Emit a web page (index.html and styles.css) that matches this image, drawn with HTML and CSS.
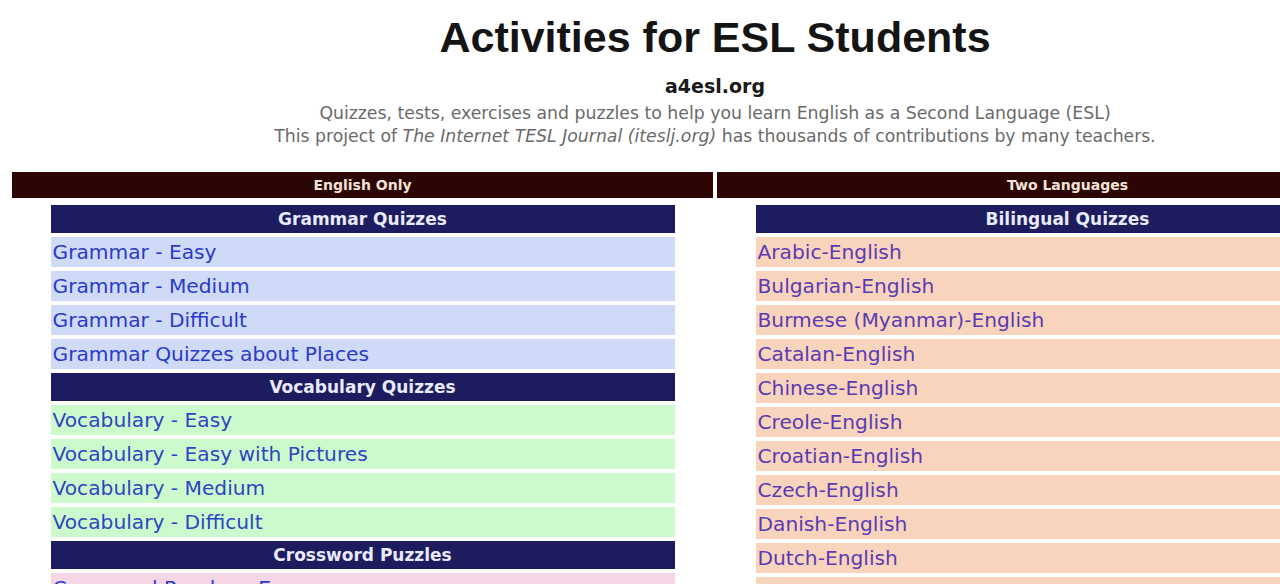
FILE: index.html
```html
<!DOCTYPE html>
<html lang="en">
<head>
<meta charset="utf-8">
<title>Activities for ESL Students</title>
<link rel="stylesheet" href="styles.css">
</head>
<body>
<div class="page">
  <header class="masthead">
    <h1 class="title">Activities for ESL Students</h1>
    <div class="site">a4esl.org</div>
    <p class="tagline">Quizzes, tests, exercises and puzzles to help you learn English as a Second Language (ESL)<br>This project of <i>The Internet TESL Journal (iteslj.org)</i> has thousands of contributions by many teachers.</p>
  </header>
  <div class="columns">
    <section class="col">
      <div class="bar">English Only</div>
      <div class="list">
        <div class="head">Grammar Quizzes</div>
        <a class="row blue" href="#">Grammar - Easy</a>
        <a class="row blue" href="#">Grammar - Medium</a>
        <a class="row blue" href="#">Grammar - Difficult</a>
        <a class="row blue" href="#">Grammar Quizzes about Places</a>
        <div class="head">Vocabulary Quizzes</div>
        <a class="row green" href="#">Vocabulary - Easy</a>
        <a class="row green" href="#">Vocabulary - Easy with Pictures</a>
        <a class="row green" href="#">Vocabulary - Medium</a>
        <a class="row green" href="#">Vocabulary - Difficult</a>
        <div class="head">Crossword Puzzles</div>
        <a class="row pink" href="#">Crossword Puzzles - Easy</a>
      </div>
    </section>
    <section class="col">
      <div class="bar">Two Languages</div>
      <div class="list">
        <div class="head">Bilingual Quizzes</div>
        <a class="row peach" href="#">Arabic-English</a>
        <a class="row peach" href="#">Bulgarian-English</a>
        <a class="row peach" href="#">Burmese (Myanmar)-English</a>
        <a class="row peach" href="#">Catalan-English</a>
        <a class="row peach" href="#">Chinese-English</a>
        <a class="row peach" href="#">Creole-English</a>
        <a class="row peach" href="#">Croatian-English</a>
        <a class="row peach" href="#">Czech-English</a>
        <a class="row peach" href="#">Danish-English</a>
        <a class="row peach" href="#">Dutch-English</a>
        <a class="row peach" href="#">Esperanto-English</a>
      </div>
    </section>
  </div>
</div>
</body>
</html>
```

FILE: styles.css
```css
html {
  overflow: hidden;
  background: #ffffff;
}
body {
  margin: 8px;
  width: 1414px;
  font-family: "DejaVu Sans", Verdana, sans-serif;
  color: #111;
}
.masthead {
  text-align: center;
}
.title {
  margin: 4px 0 0;
  font-family: "Liberation Sans", Arial, sans-serif;
  font-weight: bold;
  font-size: 43px;
  line-height: 50px;
  color: #141414;
}
.site {
  margin-top: 12px;
  font-weight: bold;
  font-size: 19px;
  line-height: 24px;
  color: #1a1a1a;
}
.tagline {
  margin: 4px 0 0;
  font-size: 17.3px;
  line-height: 23px;
  color: #6a6a6a;
}
.columns {
  margin-top: 20px;
  padding: 4px;
  display: grid;
  grid-template-columns: 701px 701px;
  gap: 4px;
}
.col {
  display: flex;
  flex-direction: column;
  align-items: center;
}
.bar {
  align-self: stretch;
  height: 26px;
  background: #2c0505;
  color: #f2e2d6;
  font-weight: bold;
  font-size: 14px;
  line-height: 26px;
  text-align: center;
}
.list {
  margin-top: 7px;
  width: 624px;
  display: flex;
  flex-direction: column;
  gap: 4px;
}
.head {
  height: 28px;
  background: #1c1c5e;
  color: #eaeaff;
  font-weight: bold;
  font-size: 17px;
  line-height: 28px;
  text-align: center;
}
.row {
  display: block;
  height: 30px;
  padding-left: 2px;
  font-size: 20.2px;
  line-height: 30px;
  text-decoration: none;
  color: #2a3acb;
}
.blue { background: #cfdaf7; }
.green { background: #cdfacd; color: #2d45c4; }
.pink { background: #f4d6e6; }
.peach { background: #f9d4bc; color: #5a3bb3; }
```
